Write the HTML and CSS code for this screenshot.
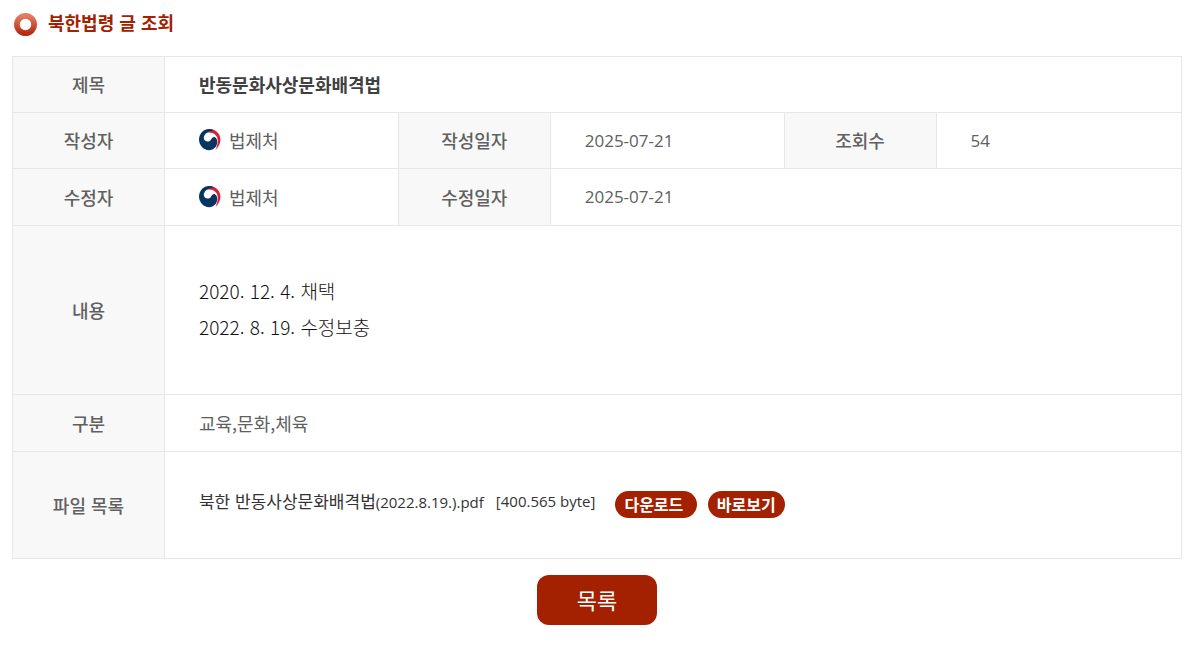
FILE: index.html
```html
<!DOCTYPE html>
<html lang="ko">
<head>
    <meta charset="UTF-8">
    <meta name="viewport" content="width=device-width, initial-scale=1.0">
    <title>북한법령 글 조회</title>
    <link rel="stylesheet" href="styles.css">
</head>
<body>
    <svg width="0" height="0" class="defs" aria-hidden="true">
        <symbol id="emblem" viewBox="0 0 22 22">
            <path d="M6 2 C10 -1 16 0 19 4 C23 9 22 16 16.5 21 C19 15 20 9 16.5 6 C14 3.5 10 3 6 4 Z" fill="#d8203c"/>
            <path d="M15 1.5 C11 -1 6 0 3 3 C-1 7 -1 14 3 18 C7 22.5 14 22 17 17.5 C19 14 18.5 9 15.5 8 C12.5 7.5 12.5 12 9.5 12.5 C6.500 13 4 10.5 5 7.500 C6.500 3.500 10 2 15 1.5 Z" fill="#063561"/>
        </symbol>
    </svg>
    <div class="container">
        <h1>
            <svg class="bullet" viewBox="0 0 24 24" aria-hidden="true">
                <defs>
                    <linearGradient id="ring" x1="0" y1="0" x2="0" y2="1">
                        <stop offset="0" stop-color="#e27c65"/>
                        <stop offset="1" stop-color="#b52d12"/>
                    </linearGradient>
                </defs>
                <circle cx="12" cy="12" r="9" fill="none" stroke="url(#ring)" stroke-width="6"/>
            </svg>
            <span>북한법령 글 조회</span>
        </h1>
        <table class="view">
            <colgroup>
                <col class="label"><col class="value">
                <col class="label"><col class="value">
                <col class="label"><col>
            </colgroup>
            <tr>
                <th scope="row">제목</th>
                <td colspan="5" class="subject">반동문화사상문화배격법</td>
            </tr>
            <tr>
                <th scope="row">작성자</th>
                <td><span class="writer"><svg class="emblem" aria-hidden="true"><use href="#emblem"/></svg>법제처</span></td>
                <th scope="row">작성일자</th>
                <td class="num">2025-07-21</td>
                <th scope="row">조회수</th>
                <td class="num">54</td>
            </tr>
            <tr class="tall">
                <th scope="row">수정자</th>
                <td><span class="writer"><svg class="emblem" aria-hidden="true"><use href="#emblem"/></svg>법제처</span></td>
                <th scope="row">수정일자</th>
                <td colspan="3" class="num">2025-07-21</td>
            </tr>
            <tr class="content">
                <th scope="row">내용</th>
                <td colspan="5">
                    <p>2020. 12. 4. 채택</p>
                    <p>2022. 8. 19. 수정보충</p>
                </td>
            </tr>
            <tr class="tall">
                <th scope="row">구분</th>
                <td colspan="5">교육,문화,체육</td>
            </tr>
            <tr class="files">
                <th scope="row">파일 목록</th>
                <td colspan="5">
                    <div class="file">
                        <span class="file-name">북한 반동사상문화배격법<span class="latin">(2022.8.19.).pdf</span></span>
                        <span class="file-size latin">[400.565 byte]</span>
                        <button type="button" class="pill">다운로드&nbsp;</button>
                        <button type="button" class="pill">바로보기</button>
                    </div>
                </td>
            </tr>
        </table>
        <div class="buttons">
            <button type="button" class="list">목록</button>
        </div>
    </div>
</body>
</html>
```
FILE: styles.css
```css
body {
    margin: 0;
    background-color: #fff;
    color: #606060;
    font-family: "Noto Sans CJK KR", sans-serif;
    font-size: 18px;
    line-height: 24px;
}
.defs {
    position: absolute;
}
.container {
    padding: 8px 18px 32px 12px;
}
h1 {
    display: flex;
    align-items: center;
    gap: 11px;
    height: 32px;
    margin: 0 0 16px;
    padding-left: 2px;
    color: #a32100;
    font-size: 18px;
    font-weight: bold;
}
h1 span {
    padding-bottom: 4px;
}
.bullet {
    width: 23px;
    height: 23px;
}
.view {
    width: 100%;
    table-layout: fixed;
    border-collapse: collapse;
}
.label {
    width: 13%;
}
.value {
    width: 20%;
}
th, td {
    height: 56px;
    box-sizing: border-box;
    padding: 0 0 1px;
    border: 1px solid #e7e7e7;
}
th {
    background-color: #f8f8f8;
    font-weight: 500;
}
td {
    padding-left: 34px;
    text-align: left;
}
.subject {
    color: #404040;
    font-weight: bold;
}
.num {
    padding-bottom: 0;
    font-family: "Open Sans", "Noto Sans", sans-serif;
    font-size: 17px;
}
.writer {
    display: flex;
    align-items: center;
    gap: 8px;
}
.emblem {
    width: 22px;
    height: 22px;
}
.tall td {
    height: 57px;
}
.content td {
    height: 169px;
    padding-bottom: 3px;
    color: #111;
    font-size: 19px;
    font-weight: 300;
}
.content p {
    margin: 0;
    line-height: 36px;
}
.files td {
    height: 107px;
    color: #333;
    font-size: 17px;
}
.file {
    display: flex;
    align-items: flex-start;
}
.file-name, .file-size {
    line-height: 20px;
}
.latin {
    font-family: "Open Sans", "Noto Sans", sans-serif;
    font-size: 15px;
}
.file-size {
    margin: 0 20px 0 12px;
}
button {
    border: none;
    background-color: #a32100;
    color: #fff;
    font-family: inherit;
    cursor: pointer;
}
.pill {
    height: 27px;
    margin-right: 11px;
    padding: 0 9px 2px;
    border-radius: 14px;
    font-size: 16px;
    font-weight: bold;
    line-height: 24px;
}
.buttons {
    margin-top: 16px;
    text-align: center;
}
.list {
    width: 120px;
    height: 50px;
    padding-bottom: 3px;
    border-radius: 12px;
    font-size: 22px;
}
```
